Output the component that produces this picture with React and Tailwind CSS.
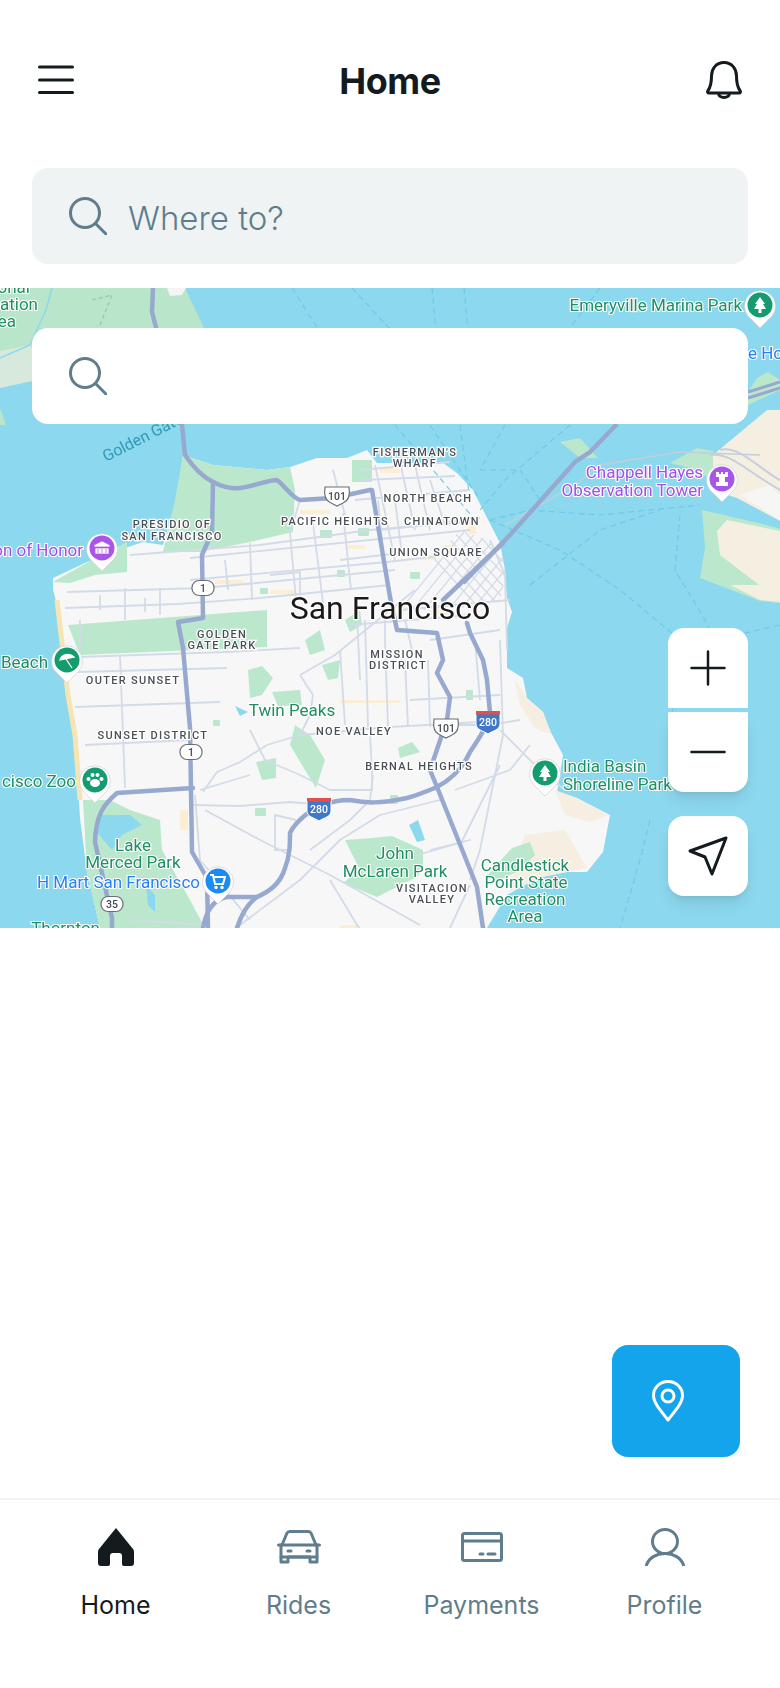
import { useId } from 'react';

const areaLabels = [
  ["FISHERMAN'S", 415, 456], ['WHARF', 415, 467], ['NORTH BEACH', 428, 502], ['CHINATOWN', 442, 525],
  ['PACIFIC HEIGHTS', 335, 525], ['UNION SQUARE', 436, 556], ['PRESIDIO OF', 172, 528], ['SAN FRANCISCO', 172, 540],
  ['GOLDEN', 222, 638], ['GATE PARK', 222, 649], ['MISSION', 397, 658], ['DISTRICT', 398, 669],
  ['OUTER SUNSET', 133, 684], ['SUNSET DISTRICT', 153, 739], ['NOE VALLEY', 354, 735], ['BERNAL HEIGHTS', 419, 770],
  ['VISITACION', 432, 892], ['VALLEY', 432, 903],
];

const parkLabels = [
  ['Twin Peaks', 292, 716, 'middle'], ['John', 395, 859, 'middle'], ['McLaren Park', 395, 877, 'middle'],
  ['Lake', 133, 851, 'middle'], ['Merced Park', 133, 868, 'middle'], ['Candlestick', 525, 871, 'middle'],
  ['Point State', 526, 888, 'middle'], ['Recreation', 525, 905, 'middle'], ['Area', 525, 922, 'middle'],
  ['India Basin', 563, 772, 'start'], ['Shoreline Park', 563, 790, 'start'], ['Emeryville Marina Park', 742, 311, 'end'],
  ['cisco Zoo', 76, 787, 'end'], ['Beach', 48, 668, 'end'], ['onal', 30, 293, 'end'], ['ation', 38, 310, 'end'],
  ['ea', 16, 327, 'end'], ['Thornton', 100, 934, 'end'],
];

const minorRoads = [
  'M67 592 L203 588 L395 570', 'M65 608 L178 604 L260 598 L390 585', 'M130 555 L260 545 L370 530 L470 522',
  'M190 558 L370 540 L470 530', 'M190 580 L387 562 L440 556', 'M77 657 L227 652 L300 648', 'M77 672 L227 668',
  'M75 707 L220 702', 'M85 745 L190 740', 'M125 588 L125 620', 'M160 588 L160 615', 'M250 543 L252 600',
  'M290 533 L296 600', 'M313 523 L323 603', 'M343 513 L351 590', 'M333 470 L345 515', 'M300 500 L290 533',
  'M375 465 L395 560', 'M400 462 L415 530', 'M355 500 L470 490', 'M380 530 L480 518', 'M203 792 L217 772 L240 762 L267 745 L300 735 L390 727 L480 722',
  'M300 675 L335 655 L390 610 L415 590', 'M300 675 L313 695 L310 715 L300 735', 'M250 730 L265 760 L300 775 L330 790 L372 790 L372 770 L370 735',
  'M193 805 L240 806 L290 802 L323 805', 'M250 775 L200 790', 'M205 810 L260 840 L330 875 L420 925', 'M296 820 L275 815 L275 850 L290 850',
  'M310 850 L350 820 L370 800', 'M370 800 L373 775', 'M430 850 L470 840 L400 860', 'M240 925 L300 880 L340 840 L380 815 L440 800',
  'M340 650 L345 725', 'M365 620 L368 727', 'M385 640 L388 727', 'M405 660 L408 727', 'M428 660 L430 727', 'M430 725 L490 725 L520 720',
  'M475 640 L480 700 M500 640 L503 735 L480 850 L470 880', 'M500 730 L540 770 L565 790', 'M455 790 L510 770 L530 745', 'M460 845 L500 765',
  'M385 605 L385 640', 'M400 610 L510 600', 'M130 920 L205 925', 'M195 795 L200 860 L250 920', 'M330 880 L360 930', 'M470 885 L450 928',
  'M490 540 L505 575 L507 650', 'M120 655 L125 788', 'M270 575 L300 572 L300 600', 'M225 560 L228 590', 'M340 560 L400 553', 'M415 465 L430 530',
  'M430 480 L445 525', 'M360 470 L450 462', 'M362 480 L455 476', 'M378 500 L384 560', 'M395 500 L402 555', 'M405 620 L412 650', 'M357 615 L360 680',
  'M350 625 L470 615', 'M430 640 L500 630', 'M410 700 L500 695', 'M145 598 L145 612', 'M100 595 L100 610', 'M80 620 L80 650',
];

const highways = [
  'M153 288 L152 312 L158 335 L182 425 L185 455 C195 470 205 478 213 482 C225 488 232 489 240 488 C255 486 268 480 277 480 C285 486 292 498 300 500 L333 498 L370 490 L372 490 L390 597 L397 630 L437 633 L443 660 L437 673 L450 697 L447 720 L430 770 L437 787',
  'M213 482 L212 532 L202 555 L203 618 L178 622 L183 648 L190 728 L192 852 L207 878 L208 928',
  'M193 788 L117 793 C103 805 96 815 95 842 L112 918 L112 928',
  'M203 928 C206 912 212 900 227 897 L257 897 C268 892 280 885 285 868 C290 855 290 845 290 833 C295 822 312 808 323 805 C335 800 345 800 350 800 C365 803 380 804 407 798 C418 795 425 792 437 787 C450 780 462 770 470 752 C480 737 488 725 490 713 L487 680 L483 660 L470 633 L467 623',
  'M237 928 C242 912 250 902 257 897', 'M437 787 L457 837 L477 887 L483 928', 'M443 600 L503 543',
];

const greens = [
  'M183 455 L213 465 L267 470 L290 467 L295 490 L293 532 L250 542 L200 552 L163 552 L175 500 Z',
  'M53 582 L90 561 L127 542 L127 572 L95 575 L70 583 Z', 'M68 625 L267 610 L267 647 L80 655 Z',
  'M83 800 L110 800 L130 810 L160 820 L162 850 L190 900 L205 928 L100 928 L87 872 Z', 'M248 670 L262 666 L273 678 L262 695 L250 698 Z',
  'M272 692 L300 690 L302 705 L278 706 Z', 'M295 725 L310 735 L325 760 L316 788 L305 770 L290 745 Z', 'M256 762 L276 758 L276 778 L262 780 Z',
  'M345 840 L372 838 L392 836 L423 850 L423 868 L417 877 L377 897 L343 883 L360 870 Z', 'M398 748 L412 742 L420 752 L400 758 Z',
  'M560 442 L580 438 L598 458 L580 458 Z', 'M670 463 L697 448 L713 451 L713 480 L690 468 Z', 'M702 510 L780 528 L780 603 L760 601 L700 578 L705 548 Z',
  'M757 378 L768 372 L780 380 L780 390 L748 405 L748 392 Z', 'M352 460 L372 460 L372 482 L352 482 Z', 'M512 848 L530 842 L535 855 L520 870 L500 880 L485 878 Z',
  'M305 640 L320 630 L325 650 L310 655 Z', 'M345 620 L360 610 L362 625 L350 632 Z', 'M322 665 L340 660 L338 678 L328 680 Z',
];

const smallGreens = [[320, 530, 12, 8], [358, 528, 11, 8], [337, 570, 8, 7], [260, 588, 8, 6], [410, 572, 10, 7], [275, 500, 9, 6], [213, 720, 7, 6], [255, 808, 11, 8], [466, 690, 7, 10], [390, 795, 8, 9], [455, 760, 6, 5]];
const sand = [[420, 555, 16, 5], [380, 468, 20, 5], [445, 545, 12, 6], [468, 520, 8, 14], [215, 580, 28, 4], [300, 510, 30, 4], [345, 545, 20, 4], [270, 590, 26, 4], [430, 610, 20, 5], [340, 700, 60, 3], [180, 810, 8, 20], [340, 925, 20, 3]];

const ferries = [
  'M292 288 L325 340', 'M352 288 L400 340', 'M432 288 L436 330', 'M464 288 L468 330', 'M600 288 L570 328', 'M570 425 L505 480 L480 510',
  'M395 425 L450 490 L475 520', 'M430 425 L480 500 M460 425 L470 500 M505 425 L480 470', 'M490 520 L530 510 L600 515 L700 505',
  'M490 520 L560 550 L620 590 L680 640', 'M530 585 L600 530 L660 510', 'M680 515 L675 570 L705 620 L715 640 M715 640 L780 625', 'M690 640 L670 720',
  'M650 820 L640 860 L620 928', 'M480 470 L520 470 L540 500',
];

function Pin({ x, y, color, children }) {
  return (
    <g transform={`translate(${x} ${y})`}>
      <path d="M0 23 L-12 11 A15.500 15.500 0 1 1 12 11 Z" fill="#ffffff" stroke="#c9c9c9" strokeWidth="0.6" />
      <circle r="12.500" fill={color} />
      {children}
    </g>
  );
}

function Shield({ x, y, label, w = 24 }) {
  return (
    <g transform={`translate(${x} ${y})`}>
      <path d={`M${-w / 2} -9 H${w / 2} Q${w / 2 + 2} 4 ${w / 4} 7 L0 10 L${-w / 4} 7 Q${-w / 2 - 2} 4 ${-w / 2} -9 Z`} fill="#ffffff" stroke="#6b6f73" strokeWidth="1.200" />
      <text y="4" textAnchor="middle" fontSize="10.500" fontWeight="500" fill="#444b50">{label}</text>
    </g>
  );
}

function Round({ x, y, label, w = 22 }) {
  return (
    <g transform={`translate(${x} ${y})`}>
      <rect x={-w / 2} y="-7.500" width={w} height="15" rx="7" fill="#ffffff" stroke="#6b6f73" strokeWidth="1.200" />
      <text y="4" textAnchor="middle" fontSize="10.500" fontWeight="500" fill="#444b50">{label}</text>
    </g>
  );
}

function Interstate({ x, y }) {
  return (
    <g transform={`translate(${x} ${y})`}>
      <path d="M-12 -9 H12 V2 C12 8 4 9 0 12 C-4 9 -12 8 -12 2 Z" fill="#3f78c9" stroke="#ffffff" strokeWidth="1" />
      <rect x="-12" y="-11" width="24" height="3.500" fill="#e0514c" />
      <text y="4" textAnchor="middle" fontSize="10.500" fontWeight="500" fill="#ffffff">280</text>
    </g>
  );
}

function MapDrawing() {
  const clip = useId();
  const cross = [];
  for (let i = 0; i < 15; i++) {
    cross.push(`M${380 + i * 12} 620 L${470 + i * 12} 510`);
    cross.push(`M${390 + i * 11} 510 L${490 + i * 11} 620`);
  }

  return (
    <svg viewBox="0 288 780 640" className="absolute inset-0 w-full h-full blur-[0.7px]" style={{ fontFamily: 'Roboto, sans-serif' }}>
      <defs>
        <clipPath id={clip}>
          <path d="M392 606 L460 530 L500 545 L506 575 L500 600 L440 612 Z" />
        </clipPath>
      </defs>
      <rect x="0" y="288" width="780" height="640" fill="#8cd8ee" />

      {/* marin headlands */}
      <path d="M0 288 H185 L205 330 L190 350 L90 400 L32 381 L0 388 Z" fill="#b9e6cb" />
      <path d="M0 351 L30 345 L40 360 L32 381 L0 388 Z" fill="#d6e9dc" />
      <path d="M52 288 L46 310 L30 345 L0 358" fill="none" stroke="#8cd8ee" strokeWidth="1.500" />
      <path d="M92 300 L112 295 L100 325 L95 340" fill="none" stroke="#8ec9a6" strokeWidth="1.200" strokeDasharray="4 3" />
      <path d="M167 288 H186 L182 295 L170 296 Z" fill="#f4f4f2" />
      <path d="M0 408 L6 425 H0 Z" fill="#b9e6cb" />

      {/* the city */}
      <path d="M183 455 L213 465 L267 470 L290 467 L317 458 L347 458 L367 450 L377 463 L443 463 L457 473 L473 490 L483 510 L500 543 L505 570 L507 598 L512 612 L507 628 L507 668 L523 678 L527 698 L543 712 L547 725 L563 755 L557 793 L577 798 L610 815 L603 852 L587 872 L567 872 L537 878 L507 895 L487 928 H100 L87 872 L80 818 L75 735 L68 695 L63 652 L57 605 L53 590 L53 578 L87 562 L113 552 L143 542 L163 545 L177 498 Z" fill="#f7f7f7" />
      <path d="M57 600 L63 652 L68 695 L75 735 L80 800" fill="none" stroke="#f7e4b3" strokeWidth="5" />
      <path d="M515 680 L527 698 L543 712 L552 735 L535 728 L520 705 Z" fill="#f6eee0" />
      <path d="M555 790 L577 798 L608 815 L590 822 L565 815 Z" fill="#f6eee0" />
      <path d="M525 835 L565 830 L587 868 L567 872 L537 878 L510 893 L515 860 Z" fill="#f6eee0" />
      {greens.map((d) => <path key={d} d={d} fill="#bbe7cd" />)}

      {/* east bay */}
      <path d="M767 410 H780 V521 L737 498 L713 490 L713 455 Z" fill="#f5efe2" />
      <path d="M740 495 L770 485 L780 495 V520 Z" fill="#f6f6f4" />
      <path d="M727 520 L780 531 V588 L763 588 L720 555 L717 531 Z" fill="#f5efe2" />
      <path d="M730 585 H780 V602 L760 600 Z" fill="#f5efe2" />

      {smallGreens.map(([x, y, w, h]) => <rect key={`${x}-${y}`} x={x} y={y} width={w} height={h} rx="1" fill="#bbe7cd" />)}
      {sand.map(([x, y, w, h]) => <rect key={`${x}-${y}`} x={x} y={y} width={w} height={h} fill="#fbeed2" />)}

      {/* lakes and bay inlets */}
      <path d="M100 815 L130 815 L142 825 L122 835 L112 850 L95 830 Z" fill="#8cd8ee" />
      <path d="M146 885 L155 895 L155 912 L148 905 Z" fill="#8cd8ee" />
      <path d="M707 495 L780 521 V529 L702 505 Z" fill="#8cd8ee" />
      <path d="M409 825 L418 820 L425 840 L417 842 Z" fill="#8cd8ee" />
      <path d="M235 706 L248 712 L240 716 Z" fill="#8cd8ee" />

      {ferries.map((d) => <path key={d} d={d} fill="none" stroke="#6cc9e8" strokeWidth="1.100" strokeDasharray="6 4" />)}
      <path d="M505 525 L575 485 L600 465 L680 452 L760 455" fill="none" stroke="#c4ced8" strokeWidth="1.500" />
      <path d="M710 455 C730 452 745 470 780 490 M720 450 C740 445 760 470 780 480" fill="none" stroke="#c6cfdb" strokeWidth="2" />

      {/* roads */}
      <g fill="none" stroke="#d3dbe8" strokeWidth="1.800" strokeLinejoin="round">
        {minorRoads.map((d) => <path key={d} d={d} />)}
      </g>
      <g clipPath={`url(#${clip})`} stroke="#d3dbe8" strokeWidth="1.300">
        {cross.map((d) => <path key={d} d={d} />)}
      </g>
      <g fill="none" stroke="#97a9cf" strokeWidth="4.500" strokeLinejoin="round" strokeLinecap="round">
        {highways.map((d) => <path key={d} d={d} />)}
      </g>
      <path d="M617 424 L590 452 L575 462 L510 535 L463 583" fill="none" stroke="#97a9cf" strokeWidth="4.500" />
      <path d="M748 392 L780 382 M748 398 L780 388" fill="none" stroke="#97a9cf" strokeWidth="3" />

      {/* labels */}
      <g fontSize="11" fontWeight="500" fill="#4a4f55" textAnchor="middle" letterSpacing="1.300" stroke="#ffffff" strokeWidth="2.500" paintOrder="stroke">
        {areaLabels.map(([t, x, y]) => <text key={t} x={x} y={y}>{t}</text>)}
      </g>
      <g fontSize="17" fill="#1f8f63" stroke="#ffffff" strokeWidth="2.200" paintOrder="stroke">
        {parkLabels.map(([t, x, y, a]) => <text key={t} x={x} y={y} textAnchor={a}>{t}</text>)}
      </g>
      <g fontSize="17" fill="#a04fe8" stroke="#ffffff" strokeWidth="2.200" paintOrder="stroke" textAnchor="end">
        <text x="83" y="556">on of Honor</text>
        <text x="703" y="478">Chappell Hayes</text>
        <text x="703" y="496">Observation Tower</text>
      </g>
      <g fontSize="17" fill="#2a7ff0" stroke="#ffffff" strokeWidth="2.200" paintOrder="stroke">
        <text x="37" y="888">H Mart San Francisco</text>
        <text x="748" y="359">e Ho</text>
      </g>
      <text transform="translate(106 462) rotate(-27)" fontSize="16" fill="#2f9ab8">Golden Gate</text>
      <text x="390" y="619" textAnchor="middle" fontSize="32" fill="#1a1a1a" stroke="#ffffff" strokeWidth="2.500" paintOrder="stroke">San Francisco</text>

      <Shield x={337} y={496} label="101" />
      <Shield x={446} y={728} label="101" />
      <Round x={203} y={588} label="1" />
      <Round x={191} y={752} label="1" />
      <Round x={112} y={904} label="35" />
      <Interstate x={319} y={809} />
      <Interstate x={488} y={722} />

      <Pin x={760} y={305} color="#159c6e"><path d="M0 -8 L5 -1 H3 L6 4 H1.500 V8 H-1.500 V4 H-6 L-3 -1 H-5 Z" fill="#fff" /></Pin>
      <Pin x={545} y={773} color="#159c6e"><path d="M0 -8 L5 -1 H3 L6 4 H1.500 V8 H-1.500 V4 H-6 L-3 -1 H-5 Z" fill="#fff" /></Pin>
      <Pin x={722} y={479} color="#a855e8"><path d="M-6 -7 H-3 V-5 H-1 V-7 H1 V-5 H3 V-7 H6 V-2 H3 V3 H6 V7 H-6 V3 H-3 V-2 H-6 Z" fill="#fff" /></Pin>
      <Pin x={102} y={548} color="#a855e8"><path d="M0 -7 L8 -3 V-1 H-8 V-3 Z M-7 0 H7 V6 H-7 Z M-4 1 V5 M0 1 V5 M4 1 V5" fill="#fff" stroke="#a855e8" strokeWidth="0.700" /></Pin>
      <Pin x={67} y={660} color="#159c6e"><path d="M-7 0 A8 7 0 0 1 7 -3 Z M-1 -1 L5 8" fill="#fff" stroke="#fff" strokeWidth="1.300" /></Pin>
      <Pin x={95} y={780} color="#159c6e">
        <g fill="#fff">
          <ellipse cx="0" cy="3" rx="5" ry="4" />
          <circle cx="-6.500" cy="-1" r="2" />
          <circle cx="-2.500" cy="-5" r="2" />
          <circle cx="2.500" cy="-5" r="2" />
          <circle cx="6.500" cy="-1" r="2" />
        </g>
      </Pin>
      <Pin x={218} y={881} color="#1a8cf0">
        <path d="M-8 -6 H-5 L-3 3 H5 L7 -4 H-4" fill="none" stroke="#fff" strokeWidth="2" />
        <circle cx="-2" cy="6.500" r="1.700" fill="#fff" />
        <circle cx="4" cy="6.500" r="1.700" fill="#fff" />
      </Pin>
      <Pin x={118} y={943} color="#159c6e" />
    </svg>
  );
}

function SearchIcon({ className }) {
  return (
    <svg viewBox="0 0 38 38" fill="none" stroke="#5f7d8c" strokeWidth="3" strokeLinecap="round" className={className}>
      <circle cx="16" cy="16" r="14.500" />
      <path d="M26.500 26.500 L37 37" />
    </svg>
  );
}

function NavItem({ label, active, children }) {
  return (
    <div className="flex-1 flex flex-col items-center">
      <div className="h-[38px] flex items-center justify-center">{children}</div>
      <span className={`mt-[21px] text-[25px] leading-[36px] ${active ? 'text-[#141b1f]' : 'text-[#5f7d8c]'}`}>{label}</span>
    </div>
  );
}

const App = () => {
  return (
    <div className="w-[780px] h-[1688px] bg-white flex flex-col overflow-hidden font-['Inter',sans-serif]">
      <header className="h-[168px] shrink-0 px-[38px] pt-[59px] flex items-start justify-between">
        <svg viewBox="0 0 36 30" className="w-[36px] h-[30px] mt-[6px]" fill="none" stroke="#141b1f" strokeWidth="3" strokeLinecap="round">
          <path d="M1.500 2 H34.500 M1.500 15 H34.500 M1.500 27.500 H34.500" />
        </svg>
        <h1 className="text-[36px] leading-[44px] font-bold text-[#141b1f] tracking-[-0.5px]">Home</h1>
        <svg viewBox="0 0 36 38" className="w-[36px] h-[38px] mt-[2px]" fill="none" stroke="#141b1f" strokeWidth="3" strokeLinejoin="round">
          <path d="M18 1.500 C10 1.500 5.500 8 5.500 15 C5.500 23 4 27 1.800 30 C1.200 31 1.800 32 3 32 H33 C34.200 32 34.800 31 34.200 30 C32 27 30.500 23 30.500 15 C30.500 8 26 1.500 18 1.500 Z" />
          <path d="M12.500 32 C12.500 35 15 36.500 18 36.500 C21 36.500 23.500 35 23.500 32" />
        </svg>
      </header>

      <div className="h-[96px] shrink-0 mx-[32px] rounded-2xl bg-[#eff3f4] flex items-center pl-[67px] relative">
        <SearchIcon className="absolute left-[37px] top-[29px] w-[38px] h-[38px]" />
        <span className="ml-[29px] pt-[5px] text-[33px] font-light text-[#5f7d8c]">Where to?</span>
      </div>

      <section className="mt-[24px] h-[640px] shrink-0 relative overflow-hidden">
        <MapDrawing />
        <div className="absolute left-[32px] right-[32px] top-[40px] h-[96px] rounded-2xl bg-white">
          <SearchIcon className="absolute left-[37px] top-[29px] w-[38px] h-[38px]" />
        </div>
        <div className="absolute right-[32px] top-[340px] w-[80px] flex flex-col">
          <button className="h-[80px] rounded-t-2xl bg-white flex items-center justify-center">
            <svg viewBox="0 0 36 36" className="w-[36px] h-[36px]" fill="none" stroke="#141b1f" strokeWidth="2.500" strokeLinecap="round"><path d="M1.500 18 H34.500 M18 1.500 V34.500" /></svg>
          </button>
          <button className="mt-[4px] h-[80px] rounded-b-2xl bg-white flex items-center justify-center shadow-lg">
            <svg viewBox="0 0 36 4" className="w-[36px] h-[4px]" fill="none" stroke="#141b1f" strokeWidth="2.500" strokeLinecap="round"><path d="M1.500 2 H34.500" /></svg>
          </button>
          <button className="mt-[24px] h-[80px] rounded-2xl bg-white flex items-center justify-center shadow-lg">
            <svg viewBox="0 0 40 40" className="w-[40px] h-[40px]" fill="none" stroke="#141b1f" strokeWidth="3" strokeLinejoin="round"><path d="M38 2 L2 15 L17 21 L24 38 Z" /></svg>
          </button>
        </div>
      </section>

      <div className="flex-1 flex items-end justify-end pr-[40px] pb-[41px]">
        <button className="w-[128px] h-[112px] rounded-2xl bg-[#14a4ec] flex items-center pl-[40px]">
          <svg viewBox="0 0 32 42" className="w-[32px] h-[42px]" fill="none" stroke="#ffffff" strokeWidth="3" strokeLinejoin="round">
            <path d="M16 40 C9 31 1.500 23 1.500 15.500 C1.500 7.500 8 1.500 16 1.500 C24 1.500 30.500 7.500 30.500 15.500 C30.500 23 23 31 16 40 Z" />
            <circle cx="16" cy="16" r="6" />
          </svg>
        </button>
      </div>

      <nav className="h-[190px] shrink-0 border-t-2 border-[#eff3f4] px-[24px] pt-[28px] flex">
        <NavItem label="Home" active>
          <svg viewBox="0 0 36 38" className="w-[36px] h-[38px]" fill="#141b1f">
            <path d="M18 0 L35 21 Q36 22 36 24 V35 Q36 38 33 38 H26 Q24 38 24 36 V28 Q24 25 21 25 H15 Q12 25 12 28 V36 Q12 38 10 38 H3 Q0 38 0 35 V24 Q0 22 1 21 Z" />
          </svg>
        </NavItem>
        <NavItem label="Rides">
          <svg viewBox="0 0 44 34" className="w-[44px] h-[34px]" fill="none" stroke="#5f7d8c" strokeWidth="3" strokeLinejoin="round" strokeLinecap="round">
            <path d="M5 15 L10 3 Q11 1.500 13 1.500 H31 Q33 1.500 34 3 L39 15" />
            <path d="M1.500 15 H42.500" />
            <path d="M4 15 V32 H11 V27 H33 V32 H40 V15" />
            <path d="M4 27 H40" />
            <path d="M11 21 H14 M30 21 H33" />
          </svg>
        </NavItem>
        <NavItem label="Payments">
          <svg viewBox="0 0 42 30" className="w-[42px] h-[30px]" fill="none" stroke="#5f7d8c" strokeWidth="3" strokeLinejoin="round" strokeLinecap="round">
            <rect x="1.500" y="1.500" width="39" height="27" rx="2" />
            <path d="M1.500 9 H40.500 M19 22 H22 M27 22 H34" />
          </svg>
        </NavItem>
        <NavItem label="Profile">
          <svg viewBox="0 0 40 38" className="w-[40px] h-[38px]" fill="none" stroke="#5f7d8c" strokeWidth="3" strokeLinecap="round">
            <ellipse cx="20" cy="13.500" rx="12.500" ry="12" />
            <path d="M1.500 37 C4 30 11 25.500 20 25.500 C29 25.500 36 30 38.500 37" />
          </svg>
        </NavItem>
      </nav>
    </div>
  );
};

export default App;
